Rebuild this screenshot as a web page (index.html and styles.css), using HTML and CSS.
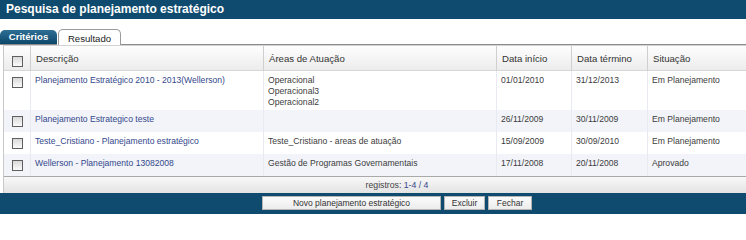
FILE: index.html
```html
<!DOCTYPE html>
<html lang="pt-BR">
<head>
<meta charset="utf-8">
<title>Pesquisa de planejamento estratégico</title>
<link rel="stylesheet" href="styles.css">
</head>
<body>
<div class="page">
  <div class="titlebar">Pesquisa de planejamento estratégico</div>
  <div class="tabs">
    <span class="tab tab-off">Critérios</span>
    <span class="tab tab-on">Resultado</span>
    <span class="tab-fill"></span>
  </div>
  <div class="panel">
    <table class="grid">
      <thead>
        <tr>
          <th class="c-cb"><span class="cb"></span></th>
          <th class="c-desc">Descrição</th>
          <th class="c-area">Áreas de Atuação</th>
          <th class="c-ini">Data início</th>
          <th class="c-fim">Data término</th>
          <th class="c-sit">Situação</th>
        </tr>
      </thead>
      <tbody>
        <tr>
          <td class="cbcell"><span class="cb"></span></td>
          <td><a class="link" href="#">Planejamento Estratégico 2010 - 2013(Wellerson)</a></td>
          <td>Operacional<br>Operacional3<br>Operacional2</td>
          <td>01/01/2010</td>
          <td>31/12/2013</td>
          <td>Em Planejamento</td>
        </tr>
        <tr class="alt">
          <td class="cbcell"><span class="cb"></span></td>
          <td><a class="link" href="#">Planejamento Estrategico teste</a></td>
          <td></td>
          <td>26/11/2009</td>
          <td>30/11/2009</td>
          <td>Em Planejamento</td>
        </tr>
        <tr>
          <td class="cbcell"><span class="cb"></span></td>
          <td><a class="link" href="#">Teste_Cristiano - Planejamento estratégico</a></td>
          <td>Teste_Cristiano - areas de atuação</td>
          <td>15/09/2009</td>
          <td>30/09/2010</td>
          <td>Em Planejamento</td>
        </tr>
        <tr class="alt">
          <td class="cbcell"><span class="cb"></span></td>
          <td><a class="link" href="#">Wellerson - Planejamento 13082008</a></td>
          <td>Gestão de Programas Governamentais</td>
          <td>17/11/2008</td>
          <td>20/11/2008</td>
          <td>Aprovado</td>
        </tr>
      </tbody>
    </table>
    <div class="pager">registros: <span class="count">1-4 / 4</span></div>
  </div>
  <div class="actions">
    <button class="btn btn-new" type="button">Novo planejamento estratégico</button>
    <button class="btn btn-del" type="button">Excluir</button>
    <button class="btn btn-close" type="button">Fechar</button>
  </div>
</div>
</body>
</html>
```
FILE: styles.css
```css
html, body {
  margin: 0;
  padding: 0;
  background: #ffffff;
  overflow: hidden;
}
body {
  font-family: "Liberation Sans", Arial, sans-serif;
  color: #3a3a3a;
}
.page {
  width: 746px;
}
.titlebar {
  height: 19px;
  line-height: 19px;
  background: #0f4b6e;
  color: #ffffff;
  font-weight: bold;
  font-size: 12px;
  padding-left: 6px;
}
.tabs {
  display: flex;
  align-items: flex-end;
  margin-top: 10px;
  height: 16px;
}
.tab {
  box-sizing: border-box;
  display: flex;
  align-items: center;
  justify-content: center;
  font-size: 9.6px;
}
.tab-off {
  width: 57px;
  height: 15px;
  background: linear-gradient(#2f6f94, #0c486b);
  color: #ffffff;
  font-weight: bold;
  border-radius: 5px 5px 0 0;
  border-bottom: 1px solid #8c8c8c;
  padding-bottom: 1px;
}
.tab-on {
  width: 63px;
  height: 16px;
  margin-left: 1px;
  background: #ffffff;
  color: #222222;
  border: 1px solid #9a9a9a;
  border-bottom: 0;
  border-radius: 5px 5px 0 0;
  padding-top: 1px;
}
.tab-fill {
  flex: 1;
  border-bottom: 1px solid #8c8c8c;
}
.panel {
  margin-left: 3px;
  border-left: 1px solid #c9c9c9;
  border-top: 1px solid #d2d2d2;
}
.grid {
  width: 742px;
  table-layout: fixed;
  border-collapse: separate;
  border-spacing: 0;
}
.grid th, .grid td {
  box-sizing: border-box;
  text-align: left;
  font-weight: normal;
}
.grid thead tr {
  height: 25px;
}
.grid th {
  font-size: 9.6px;
  color: #333333;
  background: linear-gradient(#fefefe, #ececec);
  border-right: 1px solid #cfcfcf;
  border-bottom: 1px solid #d6d6d6;
  padding: 1px 5px 0;
  vertical-align: middle;
}
.grid th.c-sit {
  border-right: 0;
}
.grid th.c-cb {
  text-align: center;
  vertical-align: top;
  padding: 10px 0 0 1px;
  line-height: 0;
}
.c-cb { width: 27px; }
.c-desc { width: 233px; }
.c-area { width: 233px; }
.c-ini { width: 75px; }
.c-fim { width: 76px; }
.c-sit { width: 98px; }
.grid tbody tr {
  height: 22px;
}
.grid td {
  font-size: 8.6px;
  line-height: 11px;
  color: #3c3c3c;
  padding: 4px 4px 2px;
  vertical-align: top;
  border-right: 1px solid #e7eaf0;
  white-space: nowrap;
  overflow: hidden;
}
.grid td:last-child {
  border-right: 0;
}
.grid td.cbcell {
  text-align: center;
  padding: 6px 0 0 1px;
  line-height: 0;
}
.grid tr.alt td {
  background: #f2f4f9;
}
.cb {
  display: inline-block;
  width: 11px;
  height: 11px;
  box-sizing: border-box;
  border: 1px solid #5f5f5f;
  background: linear-gradient(#d9d9d9, #fbfbfb);
}
.link {
  color: #34488c;
  text-decoration: none;
}
.pager {
  box-sizing: border-box;
  height: 17px;
  border-top: 1px solid #a9a9a9;
  background: linear-gradient(#f8f8f8, #e3e3e3);
  font-size: 8.7px;
  line-height: 16px;
  text-align: center;
  padding-left: 44px;
  color: #444444;
}
.count {
  color: #34488c;
}
.actions {
  background: #0f4b6e;
  display: flex;
  justify-content: center;
  gap: 3px;
  padding: 3px 0 4px 48px;
}
.btn {
  box-sizing: border-box;
  height: 14px;
  margin: 0;
  padding: 0;
  font-family: "Liberation Sans", Arial, sans-serif;
  font-size: 8.5px;
  color: #333333;
  background: linear-gradient(#fbfbfb, #ececec);
  border: 1px solid #b5b5b5;
  border-radius: 0;
}
.btn-new { width: 179px; }
.btn-del { width: 41px; }
.btn-close { width: 44px; }
```
